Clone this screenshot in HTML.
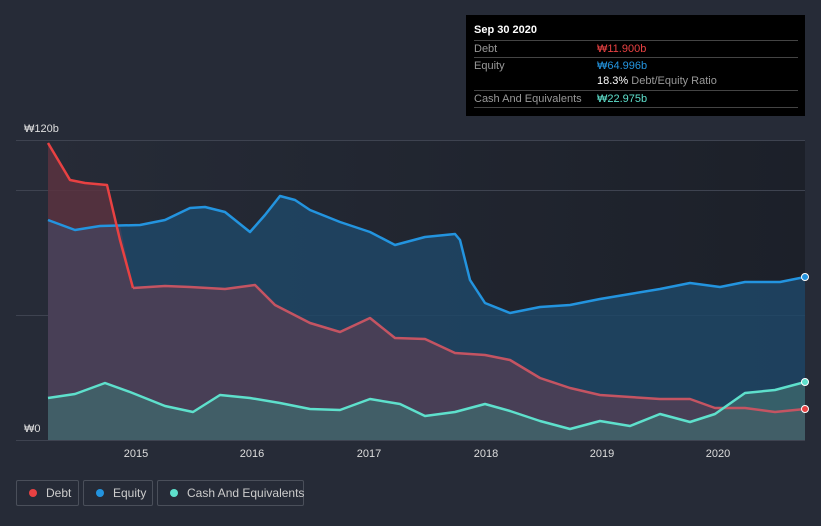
<!DOCTYPE html><html><head><style>
body{margin:0;width:821px;height:526px;background:#262b37;font-family:"Liberation Sans",sans-serif;overflow:hidden;position:relative}
.tt{position:absolute;left:466px;top:15px;width:339px;height:101px;background:#000;color:#999;font-size:11px}
.tt .r{position:absolute;left:8px;width:324px;border-top:1px solid #444;height:16px;line-height:16px}
.leg{position:absolute;top:480px;height:26px;border:1px solid #4a4f5a;border-radius:2px;color:#ccc;font-size:12px;line-height:24px;box-sizing:border-box;white-space:nowrap}
.leg i{display:inline-block;width:8px;height:8px;border-radius:50%;margin:0 9px 0 12px}
</style></head><body>
<svg width="821" height="526" style="position:absolute;left:0;top:0">
<defs><linearGradient id="bg" x1="0" x2="1"><stop offset="0" stop-color="#262b37"/><stop offset="1" stop-color="#1c2029"/></linearGradient></defs>
<rect x="48" y="140" width="757" height="300" fill="url(#bg)"/>
<g stroke="#3e4350" stroke-width="1"><line x1="16" x2="805" y1="140.5" y2="140.5"/><line x1="16" x2="805" y1="190.5" y2="190.5"/><line x1="16" x2="805" y1="315.5" y2="315.5"/><line x1="16" x2="805" y1="440.5" y2="440.5"/></g>
<polygon fill="#1f4766" opacity="0.85" points="48,440 48,220 75,230 100,226 140,225 165,220 190,208 205,207 225,212 250,232 265,215 280,196 295,200 310,210 340,222 370,232 395,245 425,237 455,234 460,240 470,280 485,303 510,313 540,307 570,305 600,299 630,294 660,289 690,283 720,287 745,282 780,282 805,277 805,440"/>
<polygon fill="#5a3340" opacity="0.85" points="48,440 48,143 70,180 85,183 107,185 120,240 133,288 165,286 190,287 225,289 255,285 275,305 310,323 340,332 370,318 395,338 425,339 455,353 485,355 510,360 540,378 570,388 600,395 630,397 660,399 690,399 715,408 745,408 775,412 805,409 805,440"/>
<polygon fill="#44445e" opacity="0.7" points="48,440 48,220 75,230 100,226 120,225 133,288 165,286 190,287 225,289 255,285 275,305 310,323 340,332 370,318 395,338 425,339 455,353 485,355 510,360 540,378 570,388 600,395 630,397 660,399 690,399 715,408 745,408 775,412 805,409 805,440"/>
<polygon fill="#3f6a6e" opacity="0.75" points="48,440 48,398 75,394 105,383 130,392 165,406 193,412 220,395 250,398 280,403 310,409 340,410 370,399 400,404 425,416 455,412 485,404 510,411 540,421 570,429 600,421 630,426 660,414 690,422 715,414 745,393 775,390 805,382 805,440"/>
<g fill="none" stroke-width="2.5" stroke-linejoin="round">
<polyline stroke="#2394df" points="48,220 75,230 100,226 140,225 165,220 190,208 205,207 225,212 250,232 265,215 280,196 295,200 310,210 340,222 370,232 395,245 425,237 455,234 460,240 470,280 485,303 510,313 540,307 570,305 600,299 630,294 660,289 690,283 720,287 745,282 780,282 805,277"/>
<polyline stroke="#e84142" points="48,143 70,180 85,183 107,185 120,240 133,288"/>
<polyline stroke="#c45462" points="133,288 165,286 190,287 225,289 255,285 275,305 310,323 340,332 370,318 395,338 425,339 455,353 485,355 510,360 540,378 570,388 600,395 630,397 660,399 690,399 715,408 745,408 775,412 805,409"/>
<polyline stroke="#5ee0cc" points="48,398 75,394 105,383 130,392 165,406 193,412 220,395 250,398 280,403 310,409 340,410 370,399 400,404 425,416 455,412 485,404 510,411 540,421 570,429 600,421 630,426 660,414 690,422 715,414 745,393 775,390 805,382"/>
</g>
<circle cx="805" cy="277" r="3.5" fill="#2394df" stroke="#fff"/><circle cx="805" cy="409" r="3.5" fill="#e84142" stroke="#fff"/><circle cx="805" cy="382" r="3.5" fill="#5ee0cc" stroke="#fff"/>
<g fill="#ddd" font-size="11" font-family="Liberation Sans,sans-serif"><text x="24" y="132">₩120b</text><text x="24" y="432">₩0</text>
<g text-anchor="middle"><text x="136" y="457">2015</text><text x="252" y="457">2016</text><text x="369" y="457">2017</text><text x="486" y="457">2018</text><text x="602" y="457">2019</text><text x="718" y="457">2020</text></g></g>
</svg>
<div class="tt"><div style="position:absolute;left:8px;top:9px;color:#fff;font-weight:bold">Sep 30 2020</div>
<div class="r" style="top:25px">Debt<span style="position:absolute;left:123px;color:#e84142">₩11.900b</span></div>
<div class="r" style="top:42px">Equity<span style="position:absolute;left:123px;color:#2394df">₩64.996b</span></div>
<div class="r" style="top:58px;border:0"><span style="position:absolute;left:123px"><b style="color:#fff;font-weight:normal">18.3%</b> Debt/Equity Ratio</span></div>
<div class="r" style="top:75px;border-bottom:1px solid #444">Cash And Equivalents<span style="position:absolute;left:123px;color:#5ee0cc">₩22.975b</span></div></div>
<div class="leg" style="left:16px;width:63px"><i style="background:#e84142"></i>Debt</div>
<div class="leg" style="left:83px;width:70px"><i style="background:#2394df"></i>Equity</div>
<div class="leg" style="left:157px;width:147px"><i style="background:#5ee0cc"></i>Cash And Equivalents</div>
</body></html>
